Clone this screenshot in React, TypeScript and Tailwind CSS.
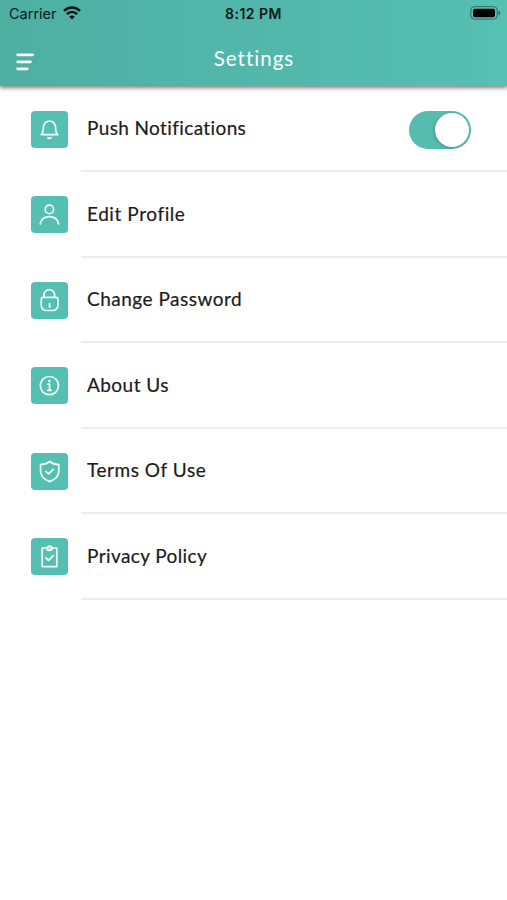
import type { ReactNode } from 'react';

type Row = { label: string; spacing: string; icon: ReactNode; toggle?: boolean };

const rows: Row[] = [
  {
    label: 'Push Notifications',
    spacing: 'tracking-[0.38px]',
    toggle: true,
    icon: (
      <>
        <path d="M10.3 23.7c1.9-1.8 2.1-3.2 2.1-7.2a6.1 6.5 0 0 1 12.2 0c0 4 .2 5.4 2.1 7.2z" />
        <path d="M17 26.7c.6.9 2.4.9 3 0" strokeWidth="1.8" />
      </>
    ),
  },
  {
    label: 'Edit Profile',
    spacing: 'tracking-[0.58px]',
    icon: (
      <>
        <circle cx="18.4" cy="13.4" r="4.2" />
        <path d="M9.2 28c.8-4.6 4.4-7.3 9.2-7.3s8.4 2.7 9.2 7.3" />
      </>
    ),
  },
  {
    label: 'Change Password',
    spacing: 'tracking-[0.5px]',
    icon: (
      <>
        <path d="M13 15.3v-2.6a5.3 5 0 0 1 10.6 0v2.6" />
        <path d="M10.3 17.3a2 2 0 0 1 2-2h12.6a2 2 0 0 1 2 2v6.2a5 5 0 0 1-5 5h-6.6a5 5 0 0 1-5-5z" />
        <path d="M18.6 21.8v3.2" strokeWidth="2" />
      </>
    ),
  },
  {
    label: 'About Us',
    spacing: 'tracking-[0.45px]',
    icon: (
      <>
        <circle cx="18.4" cy="18.6" r="9.1" />
        <path d="M17 17.2h1.6v5.9M16.8 23.3h3.4" strokeWidth="1.8" />
        <circle cx="18.4" cy="14" r="1.2" fill="white" stroke="none" />
      </>
    ),
  },
  {
    label: 'Terms Of Use',
    spacing: 'tracking-[0.55px]',
    icon: (
      <>
        <path d="M18.7 8.5c2.8 2.2 5.5 3 9.1 3.1v6.5c0 5.2-3.9 8.6-9.1 10.5-5.2-1.9-9.1-5.3-9.1-10.5v-6.5c3.6-.1 6.3-.9 9.1-3.1z" />
        <path d="m15 18.6 2.6 2.3 4.5-4.4" strokeWidth="1.9" />
      </>
    ),
  },
  {
    label: 'Privacy Policy',
    spacing: 'tracking-[0.4px]',
    icon: (
      <>
        <path d="M15.5 10h-4.3v18.6h14.6V10h-4.3" />
        <path d="M15.5 9.5c1 0 1.4-1.5 3-1.5s2 1.5 3 1.5c0 2-1 2.8-3 2.8s-3-.8-3-2.8z" fill="white" fillOpacity=".5" />
        <path d="m15 20 2.5 2.4 4.7-4.6" strokeWidth="1.9" />
      </>
    ),
  },
];

function SettingRow({ label, spacing, icon, toggle }: Row) {
  return (
    <div className="flex h-[85.5px] pl-[31px]">
      <div className="mr-[13px] flex items-center">
        <svg width="37" height="37" viewBox="0 0 37 37" className="rounded-[4px] bg-[#55bfb2]" fill="none" stroke="#effffc" strokeWidth="1.7" strokeLinecap="round" strokeLinejoin="round">
          {icon}
        </svg>
      </div>
      <div className="flex flex-1 items-center justify-between border-b-2 border-[#ededed] pr-9 pl-[6px]">
        <span className={`text-[19px] leading-6 whitespace-nowrap text-[#1c1c1c] [-webkit-text-stroke:0.2px_#1c1c1c] ${spacing}`}>{label}</span>
        {toggle && (
          <button aria-label={label} className="mt-[4px] flex h-[38px] w-[62px] items-center justify-end rounded-full bg-[#55bcae] pr-[2px]">
            <span className="size-[34px] rounded-full bg-white shadow-[-1px_1px_3px_rgba(0,0,0,0.2)]" />
          </button>
        )}
      </div>
    </div>
  );
}

export default function App() {
  return (
    <div className="h-[900px] w-[507px] overflow-hidden bg-white font-['Lato',sans-serif]">
      <header className="mb-[0.5px] h-[86px] bg-linear-to-r from-[#4eaea2] to-[#56c0b3] shadow-[0_2px_4px_rgba(0,0,0,0.5)]">
        <div className="grid h-7 grid-cols-3 items-center font-['Inter',sans-serif] text-[#081a18]">
          <div className="flex items-center gap-[6px] pl-[9px]">
            <span className="text-[14.5px] leading-5">Carrier</span>
            <svg className="-mt-[2px]" width="18" height="14" viewBox="0 0 18 14" fill="none" stroke="#03100e" strokeWidth="2.5">
              <path d="M1 4.9c4.6-4.6 11.4-4.6 16 0" />
              <path d="M3.9 8.1c3-2.9 7.2-2.9 10.2 0" />
              <path d="M6.2 10.7c1.6-1.5 4-1.5 5.6 0L9 13.6z" fill="#03100e" stroke="none" />
            </svg>
          </div>
          <span className="text-center text-[14px] leading-5 font-semibold tracking-[0.5px]">8:12 PM</span>
          <svg className="-mt-[2px] mr-[6px] justify-self-end" width="31" height="14" viewBox="0 0 31 14">
            <rect x=".8" y=".6" width="26.4" height="12.6" rx="3.7" fill="none" stroke="#316d66" />
            <rect x="3" y="2.7" width="22" height="8.6" rx="1.8" fill="#000" />
            <path d="M28.5 4.7c2.4.8 2.4 3.8 0 4.6z" fill="#316d66" />
          </svg>
        </div>
        <div className="grid h-[58px] grid-cols-3 items-center">
          <svg className="mt-[9px] ml-4" width="18" height="18" viewBox="0 0 18 18" stroke="white" strokeWidth="2.8" strokeLinecap="round">
            <path d="M1.7 1.8h15M1.7 8.8h12.7M1.7 15.8h9.6" />
          </svg>
          <h1 className="pt-[2px] pl-px text-center text-[20.5px] leading-6 tracking-[1px] text-white">Settings</h1>
        </div>
      </header>
      <main>
        {rows.map((row) => (
          <SettingRow key={row.label} {...row} />
        ))}
      </main>
    </div>
  );
}
